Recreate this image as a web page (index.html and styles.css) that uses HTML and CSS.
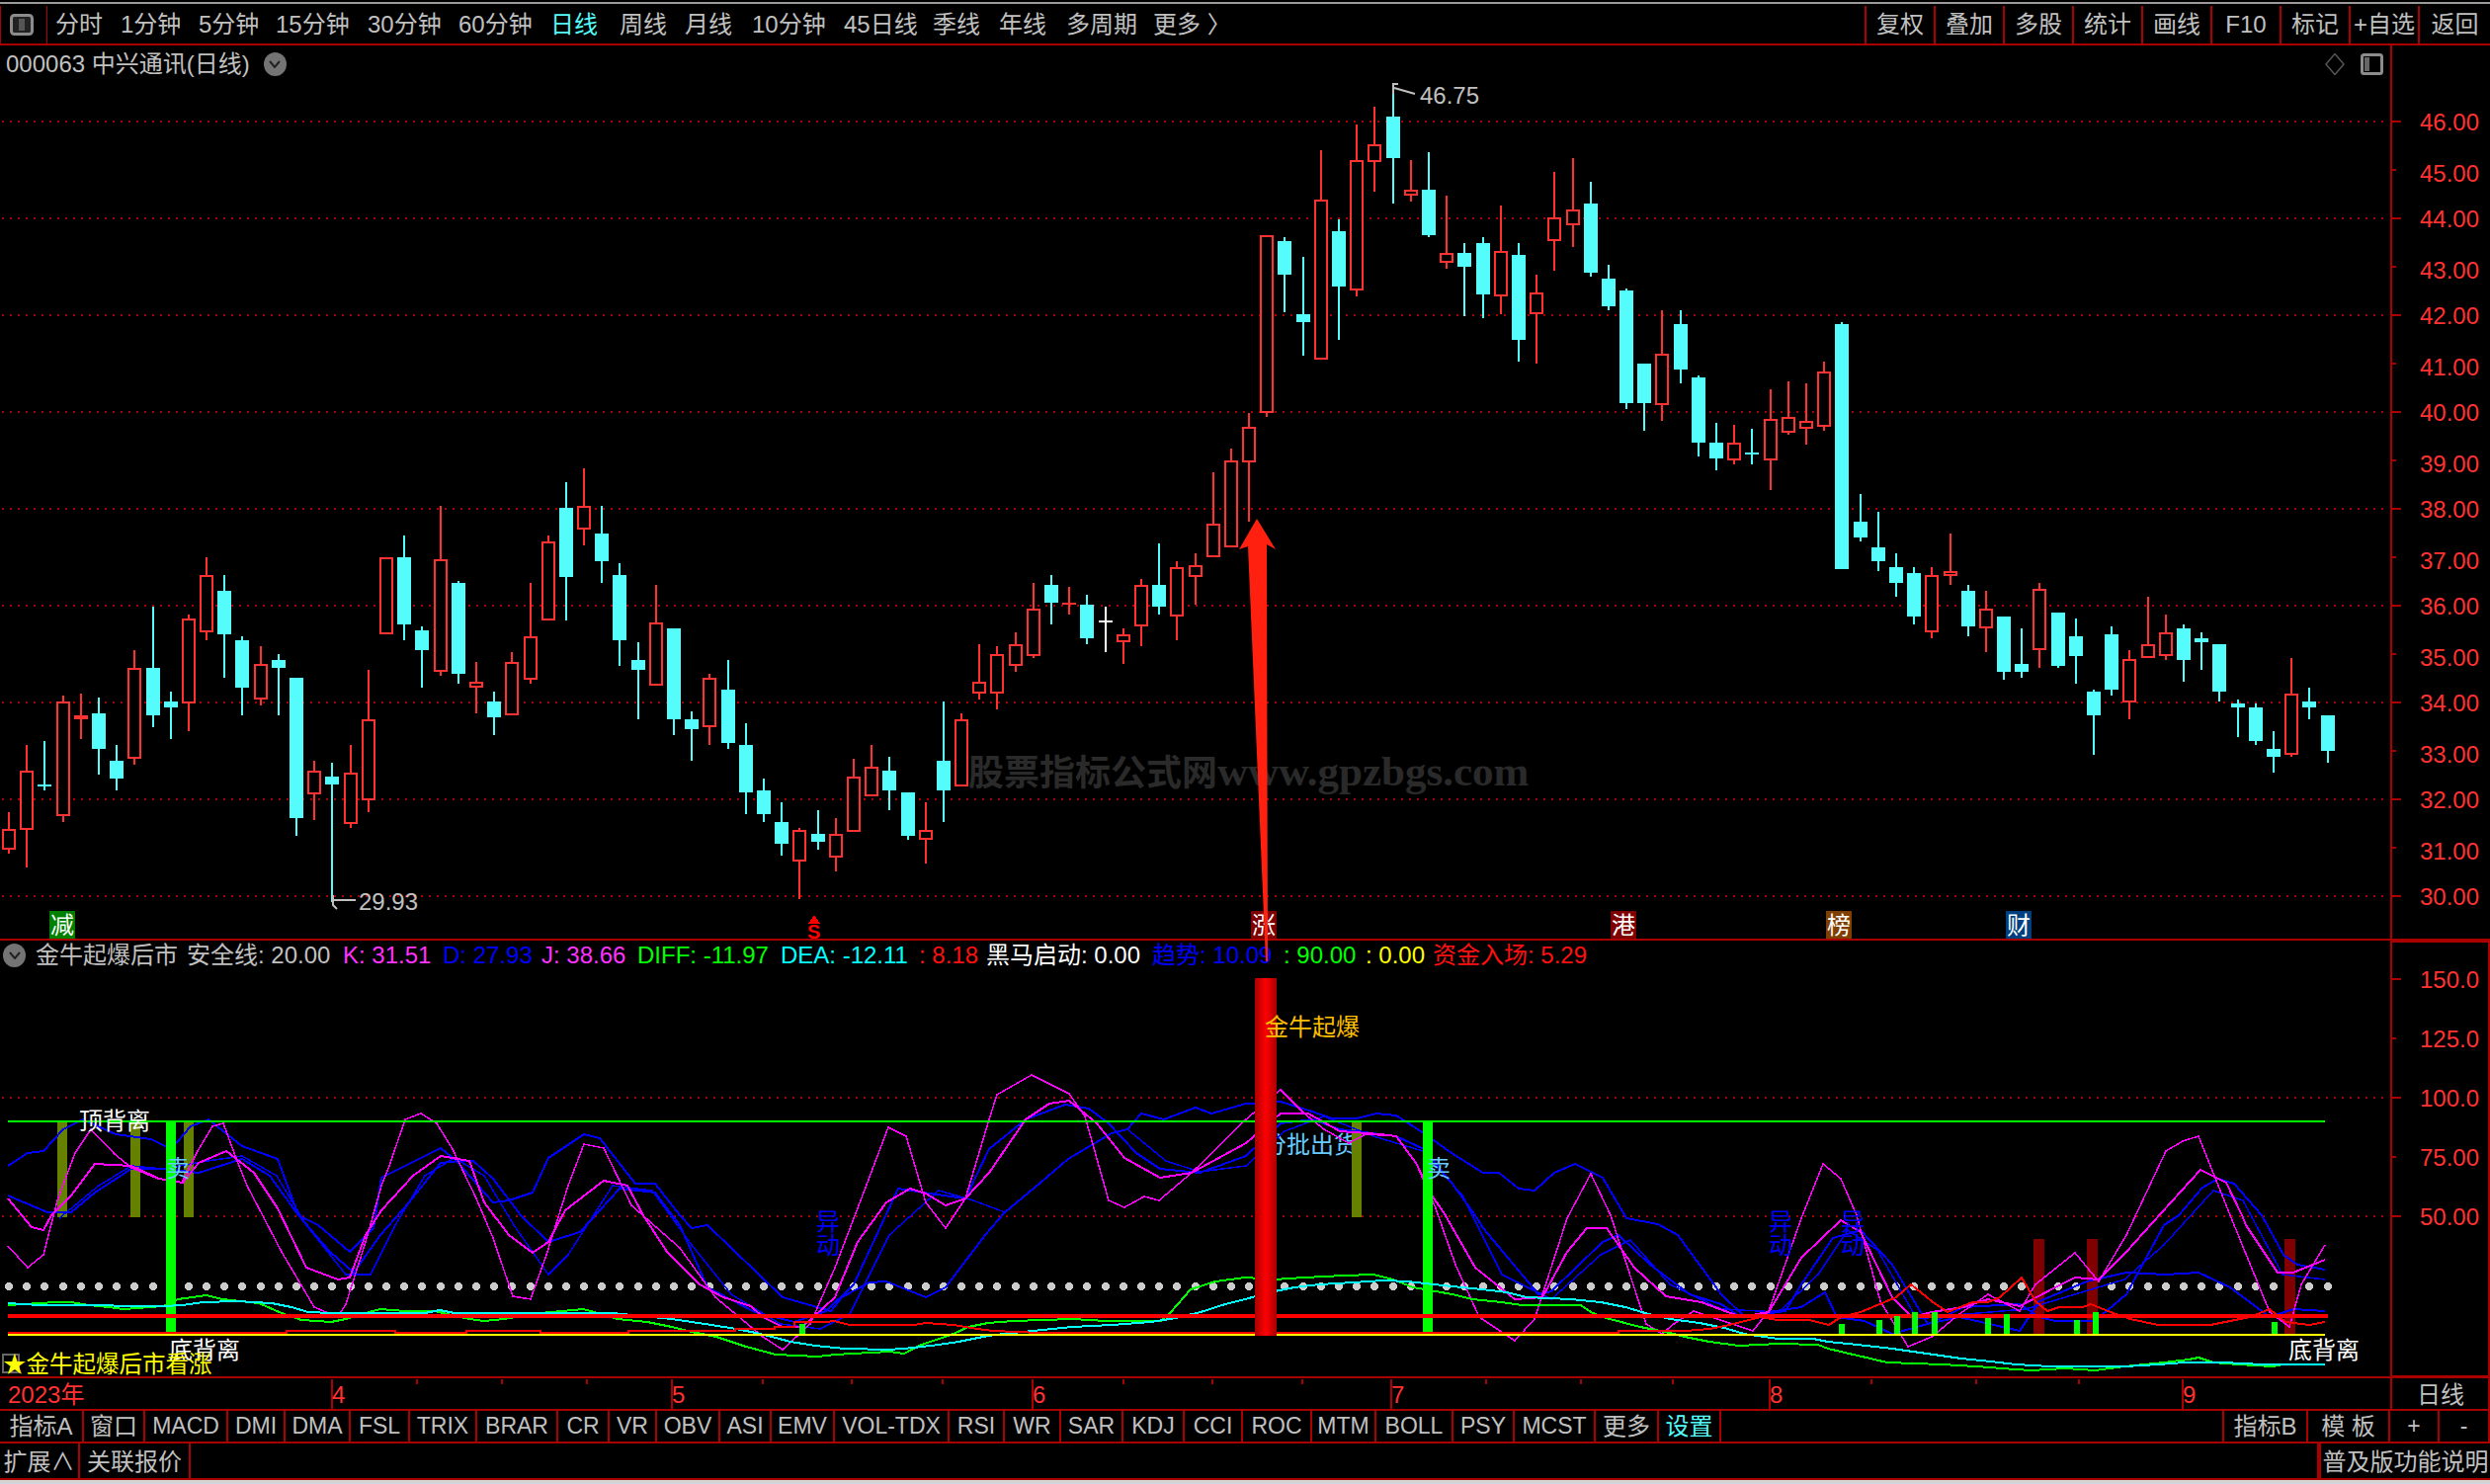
FILE: index.html
```html
<!DOCTYPE html>
<html lang="zh-CN">
<head>
	<meta charset="UTF-8">
	<title>000063 中兴通讯(日线)</title>

	<link rel="stylesheet" href="styles.css">
</head>
<body>

<div class="top-edge"></div>

<div class="toolbar">
	<div class="win-btn">
		<svg width="24" height="22" viewBox="0 0 24 22"><rect x="1.5" y="1.5" width="21" height="19" rx="3" fill="#222" stroke="#8c8c8c" stroke-width="3"/><rect x="9" y="5" width="6" height="12" fill="#555"/></svg>
	</div>
	<div class="periods">
		<span>分时</span><span>1分钟</span><span>5分钟</span><span>15分钟</span><span>30分钟</span><span>60分钟</span><span class="active">日线</span><span>周线</span><span>月线</span><span>10分钟</span><span>45日线</span><span>季线</span><span>年线</span><span>多周期</span><span>更多 〉</span>
	</div>
	<div class="tools">
		<span>复权</span><span>叠加</span><span>多股</span><span>统计</span><span>画线</span><span>F10</span><span>标记</span><span>+自选</span><span>返回</span>
	</div>
</div>

<div class="charts">
	<div class="stock-title">
		<span>000063 中兴通讯(日线)</span>
		<i class="round-btn"><svg width="12" height="8" viewBox="0 0 12 8"><path d="M1 1 L6 7 L11 1" fill="none" stroke="#222" stroke-width="2"/></svg></i>
	</div>

	<div class="corner-btns">
		<svg width="20" height="22" viewBox="0 0 20 22"><path d="M10 0.5 L19 11 L10 21.5 L1 11 Z" fill="none" stroke="#555" stroke-width="1.5"/></svg>
		<svg width="23" height="22" viewBox="0 0 23 22"><rect x="1.5" y="1.5" width="20" height="19" rx="2" fill="#000" stroke="#8c8c8c" stroke-width="3"/><rect x="4" y="4" width="5" height="14" fill="#666"/></svg>
	</div>

	<div class="ind-head">
		<i class="round-btn"><svg width="12" height="8" viewBox="0 0 12 8"><path d="M1 1 L6 7 L11 1" fill="none" stroke="#222" stroke-width="2"/></svg></i>
		<span class="gray">金牛起爆后市</span>
		<span class="gray">安全线: 20.00</span>
		<span class="pink">K: 31.51</span>
		<span class="blue">D: 27.93</span>
		<span class="pink">J: 38.66</span>
		<span class="green">DIFF: -11.97</span>
		<span class="cyan">DEA: -12.11</span>
		<span class="red">: 8.18</span>
		<span class="white">黑马启动: 0.00</span>
		<span class="blue">趋势: 10.09</span>
		<span class="green">: 90.00</span>
		<span class="yellow">: 0.00</span>
		<span class="red">资金入场: 5.29</span>
	</div>

	<svg id="chart" width="2520" height="1380" viewBox="0 46 2520 1380"></svg>
</div>

<div class="tabs">
	<span class="cn">指标A</span><span class="cn">窗口</span><span>MACD</span><span>DMI</span><span>DMA</span><span>FSL</span><span>TRIX</span><span>BRAR</span><span>CR</span><span>VR</span><span>OBV</span><span>ASI</span><span>EMV</span><span>VOL-TDX</span><span>RSI</span><span>WR</span><span>SAR</span><span>KDJ</span><span>CCI</span><span>ROC</span><span>MTM</span><span>BOLL</span><span>PSY</span><span>MCST</span><span class="cn">更多</span><span class="cn active">设置</span><span class="blank"></span><span class="cn">指标B</span><span class="cn">模 板</span><span>+</span><span>-</span>
</div>

<div class="status">
	<span>扩展∧</span><span>关联报价</span><span class="blank"></span><span>普及版功能说明</span>
</div>

<div class="bottom-edge"></div>

<script src="chart.js"></script>
</body>
</html>
```

FILE: styles.css
```css
html, body {
	width: 100%;
	height: 100%;
	margin: 0;
	overflow: hidden;
	background: #000;
	color: #c0c0c0;
	font-family: "Liberation Sans", "Noto Sans CJK SC", sans-serif;
	font-size: 24px;
}

.top-edge {
	height: 2px;
	margin-top: 2px;
	background: #9a9a9a;
}

.bottom-edge {
	height: 4px;
	background: #d4d4d4;
}

/* top bar */
.toolbar {
	display: flex;
	height: 38px;
	padding-top: 2px;
	border-bottom: 2px solid #aa0000;
}

.win-btn {
	display: flex;
	align-items: center;
	justify-content: center;
	box-sizing: border-box;
	width: 48px;
	padding-right: 4px;
	border-left: 1px solid #aa0000;
	border-right: 1px solid #aa0000;
}

.periods {
	flex: 1;
	display: grid;
	grid-template-columns: 66px 79px 78px 93px 92px 93px 70px 66px 68px 93px 90px 67px 68px 88px auto;
	padding-left: 8px;
	line-height: 38px;
	white-space: nowrap;
}

.periods .active {
	color: #54fcfc;
}

.tools {
	display: grid;
	grid-template-columns: repeat(8, 70px) 73px;
	line-height: 38px;
	text-align: center;
}

.tools span {
	border-left: 2px solid #aa0000;
	white-space: nowrap;
}

/* chart area, everything below the bar up to the tab rows */
.charts {
	position: relative;
	height: 1380px;
}

#chart {
	position: absolute;
	left: 0;
	top: 0;
	display: block;
}

.stock-title {
	position: absolute;
	left: 6px;
	top: 5px;
	display: flex;
	align-items: center;
	gap: 14px;
	line-height: 28px;
}

.round-btn {
	display: flex;
	align-items: center;
	justify-content: center;
	width: 23px;
	height: 24px;
	border-radius: 50%;
	background: #747474;
}

.corner-btns {
	position: absolute;
	left: 2353px;
	top: 8px;
	display: flex;
	gap: 16px;
}

.ind-head {
	position: absolute;
	left: 3px;
	top: 907px;
	display: grid;
	grid-template-columns: 33px 153px 158px 101px 100px 97px 145px 140px 68px 168px 133px 83px 68px auto;
	align-items: center;
	font-size: 24px;
	line-height: 28px;
	white-space: nowrap;
}

.gray { color: #c0c0c0; }
.pink { color: #ff32ff; }
.blue { color: #0000ff; }
.green { color: #00ff00; }
.cyan { color: #00ffff; }
.red { color: #ff1010; }
.white { color: #fff; }
.yellow { color: #ffff00; }

/* svg parts */
#chart text {
	font-family: "Liberation Sans", "Noto Sans CJK SC", sans-serif;
}

.pixel {
	shape-rendering: crispEdges;
}

.grid-line {
	stroke: #aa0000;
	stroke-width: 2;
	stroke-dasharray: 2 6;
	shape-rendering: crispEdges;
}

.frame-line {
	fill: #aa0000;
	shape-rendering: crispEdges;
}

.axis-label {
	fill: #ff3232;
	font-size: 24px;
}

.date-label {
	fill: #ff3232;
	font-size: 24px;
}

.span-label {
	fill: #c0c0c0;
	font-size: 24px;
}

.side-label {
	fill: #c0c0c0;
	font-size: 24px;
}

#chart .watermark {
	fill: #2a2a2a;
	font-family: "Liberation Serif", "Noto Sans CJK SC", serif;
	font-size: 43px;
	font-weight: bold;
}

.watermark .wm-cn {
	font-size: 36px;
}

.tag {
	fill: #fff;
	font-size: 24px;
}

.sig {
	font-size: 24px;
}

.sig-long {
	font-size: 23.5px;
}

.curve {
	fill: none;
	stroke-linejoin: miter;
	shape-rendering: crispEdges;
}

/* tab rows */
.tabs {
	display: grid;
	grid-template-columns: 85px 62px 84px 58px 66px 60px 68px 82px 52px 48px 64px 52px 64px 116px 56px 57px 63px 62px 59px 70px 65px 78px 62px 82px 64px 63px 509px 85px 83px 50px 51px;
	box-sizing: border-box;
	height: 35px;
	border-top: 2px solid #aa0000;
	border-bottom: 2px solid #aa0000;
	font-size: 23px;
	line-height: 31px;
	text-align: center;
	white-space: nowrap;
}

.tabs span {
	box-sizing: border-box;
	border-right: 2px solid #aa0000;
}

.tabs .cn {
	font-size: 24px;
}

.tabs .active {
	color: #54fcfc;
}

.status {
	display: grid;
	grid-template-columns: 81px 112px 1fr 173px;
	box-sizing: border-box;
	height: 37px;
	border-bottom: 2px solid #aa0000;
	line-height: 37px;
	text-align: center;
	white-space: nowrap;
}

.status span {
	box-sizing: border-box;
	border-right: 2px solid #aa0000;
}

.status span:last-child {
	border-right: 0;
	border-left: 2px solid #aa0000;
}
```

FILE: chart.js
```js
(function() {

	var RED = '#ff3232', CYAN = '#54fcfc';
	var out = [];

	// top, k: how a row's numbers map to page y
	// wick top, body top, body bottom, wick bottom, kind (r hollow, c cyan, f flat red, w white)
	var candleBlocks = [
		{ top: 520, k: 3, rows: [
			[906,956,1020,1032,'r'],[702,781,959,1074,'r'],[690,823,829,840,'c'],[552,571,917,936,'r'],
			[546,612,624,684,'f'],[558,606,714,792,'c'],[702,750,804,840,'c'],[414,469,743,762,'r'],
			[282,468,612,648,'c'],[540,570,588,684,'c'],[306,319,575,660,'r'],[132,187,359,384,'r'],
			[186,234,366,498,'c'],[372,384,528,612,'c'],[402,457,563,582,'r'],[426,444,468,612,'c'],
			[498,498,924,978,'c'],[750,781,851,930,'r'],[756,798,822,1180,'c'],[702,787,941,954,'r'],
			[474,625,869,906,'r'],[133,133,365,365,'r'],[66,132,336,384,'c'],[342,354,414,528,'c'],
			[-24,139,479,492,'r'],[204,210,486,516,'c'],[450,511,527,606,'r'],[540,570,618,672,'c'],
			[420,451,611,612,'r'],[210,373,503,516,'r'],[66,85,323,324,'r'],[-96,-18,192,324,'c'],
			[-138,-24,47,96,'r'],[-24,60,144,210,'c'],[150,186,384,462,'c'],[390,444,474,624,'c'],
			[216,331,521,522,'r'],[348,348,624,672,'c'],[600,624,654,750,'c'],[486,499,647,702,'r'],
			[444,534,696,714,'c'],[636,702,846,912,'c'],[804,840,912,936,'c'],[876,936,1002,1038,'c'],
			[954,961,1055,1170,'r'],[900,972,996,1020,'c'],
			[924,973,1043,1086,'r'],[744,799,965,965,'r'],[702,769,857,857,'r'],[738,780,840,900,'c'],
			[846,846,978,990,'c'],[876,961,989,1062,'r'],[570,750,840,936,'c'],[606,625,827,828,'r'],
			[396,511,545,564,'r'],[402,427,545,594,'r'],[360,397,461,480,'r'],[210,289,431,438,'r'],
			[186,216,270,336,'c'],[222,270,276,306,'f'],[246,276,378,396,'c'],[282,324,330,420,'w'],
			[348,367,389,456,'r'],[198,217,341,402,'r'],[90,216,282,306,'c'],[144,163,311,384,'r'],
			[120,157,191,276,'r'],[-126,31,131,131,'r'],[-198,-162,102,102,'r']
		] },
		{ top: 60, k: 3, rows: [
			[1074,1117,1223,1404,'r'],[535,535,1073,1086,'r'],[540,552,654,768,'c'],[600,774,798,900,'c'],
			[276,427,911,911,'r'],[486,522,690,852,'c'],[198,307,701,720,'r'],[144,259,311,402,'r'],
			[78,174,300,438,'c'],[306,397,413,432,'r'],[282,396,534,540,'c'],[414,589,617,636,'r'],
			[558,588,630,780,'c'],[540,558,714,786,'c'],[444,583,719,774,'r'],[558,594,852,918,'c'],
			[654,709,773,924,'r'],[342,481,551,642,'r'],[300,457,503,570,'r'],[372,438,648,660,'c'],
			[624,666,750,762,'c'],[696,702,1044,1062,'c'],[924,924,1044,1128,'c'],[762,895,1049,1098,'r'],
			[762,804,942,984,'c'],[960,966,1164,1206,'c'],[1104,1164,1212,1248,'c'],[1110,1165,1217,1230,'r'],
			[1122,1194,1200,1230,'c'],[1002,1093,1217,1308,'r'],[978,1087,1133,1140,'r'],[984,1099,1121,1170,'r'],
			[918,949,1115,1128,'r']
		] },
		{ top: 300, k: 2.45, rows: [
			[64,69,676,676,'c'],[490,559,598,608,'c'],[534,622,657,681,'c'],[637,671,710,745,'c'],
			[671,686,794,813,'c'],[671,692,832,848,'r'],[588,682,694,715,'r'],[715,730,818,843,'c'],
			[730,775,822,882,'r'],[794,794,931,951,'c'],[823,911,931,946,'c'],[710,726,876,921,'r'],
			[784,784,916,921,'c'],[799,843,892,960,'c'],[975,980,1039,1137,'c'],[818,838,975,990,'c'],
			[877,898,1008,1049,'r'],[745,863,896,897,'r'],[789,834,891,902,'r'],[813,823,902,955,'c'],
			[833,848,857,926,'c'],[862,862,980,1004,'c'],[1000,1009,1019,1093,'c'],[1009,1019,1102,1112,'c'],
			[1078,1122,1142,1181,'c'],[897,986,1137,1142,'r'],[970,1004,1019,1049,'c'],[1039,1039,1127,1156,'c']
		] }
	];

	var lines = {
		pinkFast: [8,1261,28,1283,44,1270,58,1215,76,1167,92,1143,116,1168,133,1182,160,1193,184,1197,200,1165,215,1140,226,1137,240,1175,250,1200,285,1267,318,1323,342,1333,350,1320,370,1257,386,1200,394,1180,410,1133,426,1127,442,1137,458,1163,482,1213,499,1253,519,1312,537,1315,553,1270,575,1200,591,1158,611,1162,639,1220,688,1263,724,1313,772,1353,792,1366,820,1340,845,1283,871,1215,899,1141,917,1150,937,1217,957,1243,977,1213,1001,1133,1009,1108,1044,1088,1082,1107,1098,1130,1122,1215,1138,1222,1158,1211,1173,1215,1206,1187,1261,1133,1296,1103,1320,1127,1340,1143,1365,1157,1382,1148,1413,1150,1433,1177,1453,1223,1473,1280,1497,1333,1533,1357,1553,1335,1586,1233,1610,1188,1630,1230,1642,1267,1666,1340,1682,1350,1694,1340,1714,1327,1774,1347,1790,1327,1823,1233,1845,1178,1863,1193,1879,1230,1903,1317,1931,1363,1955,1353,1983,1330,2012,1310,2044,1327,2060,1300,2100,1268,2124,1297,2152,1250,2192,1165,2209,1155,2225,1150,2241,1190,2257,1230,2297,1328,2317,1343,2329,1300,2353,1260],
		pinkSlow: [8,1213,32,1242,44,1245,52,1230,72,1210,96,1178,133,1180,161,1193,185,1197,201,1177,229,1165,257,1187,281,1223,310,1283,342,1295,354,1293,370,1250,386,1225,418,1190,446,1170,475,1175,490,1217,515,1250,539,1268,555,1257,572,1225,611,1195,635,1200,651,1230,675,1267,708,1300,732,1313,760,1322,772,1333,792,1343,812,1343,845,1313,868,1257,897,1217,921,1203,937,1208,957,1220,977,1213,1001,1187,1038,1133,1062,1117,1082,1114,1110,1137,1138,1172,1174,1192,1206,1187,1261,1157,1296,1127,1324,1127,1356,1145,1397,1148,1413,1150,1433,1177,1449,1210,1461,1227,1493,1283,1533,1315,1561,1313,1586,1267,1606,1243,1626,1243,1654,1283,1686,1312,1722,1318,1762,1333,1790,1328,1823,1273,1863,1235,1883,1247,1915,1313,1935,1333,1955,1328,1987,1323,2012,1315,2044,1322,2080,1303,2100,1293,2124,1295,2152,1267,2188,1227,2227,1184,2253,1197,2269,1230,2273,1240,2305,1288,2321,1288,2353,1275],
		blueFast: [8,1180,28,1167,44,1165,64,1143,84,1133,117,1148,153,1153,173,1163,193,1140,211,1133,245,1160,281,1173,302,1230,322,1240,354,1267,378,1243,386,1192,410,1180,446,1162,462,1175,499,1217,515,1215,539,1207,555,1172,591,1148,607,1152,643,1198,663,1198,688,1230,700,1243,716,1240,792,1313,841,1327,852,1313,880,1298,897,1297,937,1313,957,1303,997,1250,1017,1227,1053,1197,1081,1173,1125,1147,1141,1143,1155,1127,1178,1133,1210,1121,1226,1127,1261,1117,1296,1115,1328,1125,1348,1132,1373,1132,1393,1127,1413,1129,1441,1147,1469,1167,1501,1187,1517,1187,1537,1203,1553,1205,1573,1187,1594,1178,1622,1192,1646,1233,1678,1239,1698,1250,1742,1310,1766,1333,1790,1328,1823,1323,1847,1308,1859,1333,1887,1337,1915,1350,1951,1340,1983,1333,2044,1347,2064,1317,2112,1297,2152,1288,2192,1290,2225,1288,2257,1303,2297,1333,2321,1325,2353,1327],
		blueMid: [8,1210,48,1227,72,1227,96,1207,133,1183,165,1183,201,1187,245,1173,273,1190,302,1230,334,1267,358,1288,385,1250,414,1217,446,1177,466,1175,479,1175,499,1193,527,1230,555,1257,587,1247,627,1203,663,1207,688,1240,716,1303,764,1328,804,1338,836,1327,864,1300,909,1203,941,1208,977,1213,1001,1163,1038,1133,1078,1118,1102,1122,1122,1137,1150,1167,1174,1183,1214,1187,1261,1170,1296,1137,1328,1133,1356,1143,1413,1150,1441,1163,1469,1197,1493,1230,1501,1243,1557,1310,1570,1307,1622,1257,1638,1250,1670,1280,1710,1310,1742,1320,1762,1333,1807,1327,1823,1300,1855,1253,1883,1245,1915,1280,1951,1340,1967,1333,1987,1323,2044,1320,2064,1333,2080,1337,2120,1337,2152,1310,2190,1240,2205,1230,2229,1202,2245,1193,2261,1198,2289,1230,2311,1270,2325,1280,2353,1285],
		blueSlow: [60,1233,100,1200,133,1180,165,1183,210,1175,245,1170,280,1190,310,1240,350,1290,375,1290,400,1240,430,1190,460,1172,490,1190,520,1240,555,1290,575,1270,620,1200,660,1205,700,1260,740,1310,790,1340,830,1345,860,1330,900,1250,950,1205,985,1215,1017,1227,1053,1197,1081,1173,1125,1147,1141,1143,1180,1175,1214,1186,1261,1180,1300,1145,1340,1130,1390,1150,1440,1165,1480,1210,1520,1290,1570,1315,1620,1270,1650,1255,1690,1300,1742,1325,1800,1328,1840,1290,1870,1245,1900,1265,1940,1335,1990,1330,2050,1325,2100,1310,2150,1295,2190,1260,2240,1205,2270,1215,2310,1290,2353,1295],
		redThin: [8,1349,290,1349,290,1347,400,1347,400,1349,472,1349,472,1347,547,1347,547,1349,636,1349,636,1347,744,1347,744,1345,784,1345,784,1343,804,1343,804,1338,836,1338,844,1337,860,1341,925,1341,937,1339,965,1341,989,1345,1005,1347,1053,1349,1638,1349,1638,1347,1706,1347,1730,1345,1746,1342,1766,1337,1782,1333,1799,1336,1831,1336,1851,1341,1863,1333,1883,1328,1919,1313,1934,1300,1955,1317,1971,1328,1996,1318,2012,1318,2024,1313,2046,1293,2060,1317,2072,1327,2084,1323,2108,1323,2116,1320,2136,1328,2156,1335,2184,1341,2237,1341,2257,1337,2277,1333,2297,1325,2313,1338,2337,1341,2353,1338],
		diff: [8,1321,56,1318,72,1318,90,1321,110,1323,125,1325,165,1322,180,1315,209,1311,225,1315,262,1319,285,1329,305,1336,335,1338,350,1335,370,1329,385,1325,410,1327,440,1327,475,1335,490,1337,510,1335,547,1329,590,1325,605,1329,625,1335,655,1338,680,1343,700,1348,725,1353,755,1363,785,1371,828,1373,845,1371,900,1368,915,1370,930,1362,965,1350,980,1343,1000,1339,1025,1337,1055,1336,1085,1335,1120,1337,1175,1337,1185,1328,1205,1305,1230,1297,1260,1293,1290,1295,1320,1293,1360,1291,1390,1290,1410,1295,1430,1303,1470,1310,1490,1315,1520,1318,1540,1321,1600,1321,1610,1328,1625,1334,1660,1343,1690,1349,1705,1353,1730,1358,1760,1362,1800,1360,1840,1361,1850,1365,1880,1372,1910,1379,1965,1381,2000,1383,2040,1386,2055,1387,2090,1385,2120,1387,2150,1383,2170,1381,2190,1379,2215,1376,2225,1374,2240,1379,2265,1381,2300,1383,2310,1381,2353,1381],
		dea: [8,1319,40,1321,100,1321,130,1322,165,1322,185,1321,205,1318,240,1317,275,1319,295,1323,312,1328,335,1329,430,1329,445,1326,460,1329,620,1329,680,1335,700,1338,720,1341,745,1345,765,1349,785,1354,800,1358,825,1362,855,1365,900,1366,925,1364,950,1361,970,1358,1000,1352,1025,1349,1055,1346,1085,1343,1125,1341,1165,1338,1190,1334,1215,1328,1240,1320,1260,1315,1290,1307,1310,1303,1335,1300,1370,1298,1400,1296,1425,1297,1460,1301,1500,1305,1525,1308,1545,1313,1590,1315,1620,1318,1645,1323,1665,1329,1690,1335,1720,1339,1745,1344,1765,1350,1785,1353,1800,1355,1835,1355,1850,1358,1880,1361,1915,1365,1950,1370,1985,1375,2015,1378,2040,1381,2075,1383,2150,1383,2185,1381,2210,1379,2250,1379,2290,1381,2353,1381]
	};

	function candleX(i) {
		return Math.round(9 + i * 18.19);
	}

	function rect(x, y, w, h, fill) {
		out.push('<rect x="' + x + '" y="' + y + '" width="' + w + '" height="' + h + '" fill="' + fill + '"/>');
	}

	function frame(x, y, w, h) {
		out.push('<rect class="frame-line" x="' + x + '" y="' + y + '" width="' + w + '" height="' + h + '"/>');
	}

	function text(cls, x, y, str, fill) {
		out.push('<text class="' + cls + '" x="' + x + '" y="' + y + '"' + (fill ? ' fill="' + fill + '"' : '') + '>' + str + '</text>');
	}

	function gridLine(y) {
		out.push('<line class="grid-line" x1="2" x2="2417" y1="' + y + '" y2="' + y + '"/>');
	}

	function curve(points, color, width) {
		var p = [];
		for (var i = 0; i < points.length; i += 2) p.push(points[i] + ',' + points[i + 1]);
		out.push('<polyline class="curve" points="' + p.join(' ') + '" stroke="' + color + '" stroke-width="' + width + '"/>');
	}

	function drawPriceGrid() {
		for (var price = 46; price >= 30; price--) {
			var y = 123 + (46 - price) * 49;
			var even = price % 2 === 0;
			if (even) gridLine(y);
			frame(2421, y - 1, even ? 9 : 4, 2);
			text('axis-label', 2449, y + (even ? 9 : 12), price + '.00');
		}
	}

	function drawCandles() {
		var n = 0;
		candleBlocks.forEach(function(block) {
			block.rows.forEach(function(r) {
				var x = candleX(n++);
				var wickTop = Math.round(block.top + r[0] / block.k);
				var bodyTop = Math.round(block.top + r[1] / block.k);
				var bodyBottom = Math.round(block.top + r[2] / block.k);
				var wickBottom = Math.round(block.top + r[3] / block.k);
				var kind = r[4];
				var color = kind === 'c' ? CYAN : kind === 'w' ? '#fff' : RED;

				if (wickBottom > wickTop) rect(x - 1, wickTop, 2, wickBottom - wickTop, color);

				if (kind === 'r') {
					out.push('<rect x="' + (x - 6) + '" y="' + (bodyTop + 1) + '" width="12" height="' + (bodyBottom - bodyTop - 2) + '" fill="#000" stroke="' + RED + '" stroke-width="2"/>');
				} else {
					rect(x - 7, bodyTop, 14, Math.max(bodyBottom - bodyTop, 2), color);
				}
			});
		});
	}

	function drawExtremes() {
		out.push('<path d="M1410 95 V85 H1415 M1411 89 L1432 95" fill="none" stroke="#c0c0c0" stroke-width="2"/>');
		text('span-label', 1437, 105, '46.75');
		out.push('<path d="M337 906 V916 L341 920 M337 911 H360" fill="none" stroke="#c0c0c0" stroke-width="2"/>');
		text('span-label', 363, 921, '29.93');
	}

	function drawTags() {
		[['减', 50, '#007f00'], ['涨', 1266, '#7f0000'], ['港', 1630, '#7f0000'], ['榜', 1848, '#7f3f00'], ['财', 2030, '#003f7f']].forEach(function(t) {
			rect(t[1], 922, 26, 28, t[2]);
			text('tag', t[1] + 1, 945, t[0]);
		});
		out.push('<polygon points="824,926 830,935 818,935" fill="#ff0000"/>');
		out.push('<text x="817" y="950" fill="#ff0000" font-size="20" font-weight="bold">S</text>');
	}

	function drawArrow() {
		out.push('<polygon points="1272,525 1291,556 1282,551 1283,973 1281,973 1263,553 1254,556" fill="#ff2010"/>');
	}

	function drawIndicatorAxis() {
		[[150, '150.0', 9], [125, '125.0', 4], [100, '100.0', 9], [75, '75.00', 4], [50, '50.00', 9]].forEach(function(t) {
			var y = 1111 + (100 - t[0]) * 2.4;
			if (t[0] === 100 || t[0] === 50) gridLine(y);
			frame(2421, y - 1, t[2], 2);
			text('axis-label', 2449, y + 9, t[1]);
		});
	}

	function drawIndicator() {
		var i;

		text('sig', 1278, 1167, '分批出货', '#66ccff');

		// white dots, one on every candle
		for (i = 0; i < 130; i++) {
			out.push('<circle cx="' + candleX(i) + '" cy="1302" r="4" fill="#cccccc"/>');
		}

		// olive and green columns
		[58, 132, 186, 1368].forEach(function(x) { rect(x, 1135, 10, 97, '#668000'); });
		[2058, 2112, 2312].forEach(function(x) { rect(x, 1254, 11, 97, '#800000'); });

		curve(lines.blueSlow, '#0000ff', 1.5);
		curve(lines.blueMid, '#0000ff', 2);
		curve(lines.blueFast, '#0000ff', 2);
		curve(lines.pinkFast, '#ff00ff', 1.5);
		curve(lines.pinkSlow, '#ff00ff', 2);

		rect(8, 1134, 2345, 2, '#00ff00');
		rect(168, 1135, 10, 213, '#00ff00');
		rect(1440, 1135, 10, 213, '#00ff00');

		curve(lines.diff, '#00ff00', 2);
		curve(lines.dea, '#00ffff', 2);

		rect(8, 1330, 2348, 4, '#ff0000');
		curve(lines.redThin, '#ff0000', 2);

		[[809, 1340], [1861, 1340], [1899, 1336], [1917, 1332], [1935, 1328], [1955, 1328], [2009, 1334], [2028, 1330], [2099, 1336], [2118, 1328], [2299, 1338]].forEach(function(b) {
			rect(b[0], b[1], 6, 1350 - b[1], '#00ff00');
		});

		rect(8, 1350, 2345, 2, '#ffff00');
		rect(1270, 990, 22, 362, 'url(#bigBar)');

		text('sig', 80, 1143, '顶背离', '#fff');
		text('sig', 171, 1375, '底背离', '#fff');
		text('sig', 2316, 1375, '底背离', '#fff');
		out.push('<rect x="3" y="1371" width="16" height="18" fill="none" stroke="#666" stroke-width="2"/>');
		text('sig-long', 3, 1389, '★金牛起爆后市看涨', '#ffff00');
		text('sig', 1280, 1048, '金牛起爆', '#ffc000');
		text('sig', 168, 1191, '卖', '#66ccff');
		text('sig', 1444, 1191, '卖', '#66ccff');

		[826, 1790, 1863].forEach(function(x) {
			text('sig', x, 1245, '异', '#0000ff');
			text('sig', x, 1269, '动', '#0000ff');
		});
	}

	function drawDates() {
		[335, 679, 1044, 1407, 1790, 2208].forEach(function(x) { frame(x, 1396, 2, 30); });
		[421, 507, 593, 771, 861, 953, 1136, 1226, 1317, 1503, 1599, 1692, 1893, 1999, 2103].forEach(function(x) { frame(x, 1396, 2, 5); });
		text('date-label', 8, 1420, '2023年');
		[[336, '4'], [680, '5'], [1045, '6'], [1408, '7'], [1791, '8'], [2209, '9']].forEach(function(d) {
			text('date-label', d[0], 1420, d[1]);
		});
		text('side-label', 2446, 1420, '日线');
	}

	function drawFrame() {
		frame(0, 950, 2520, 2);
		frame(2419, 950, 101, 4);
		frame(0, 1393, 2520, 2);
		frame(2419, 1392, 101, 3);
		frame(2419, 46, 2, 1380);
		frame(2518, 950, 2, 476);
	}

	out.push('<defs><linearGradient id="bigBar"><stop offset="0" stop-color="#a80000"/><stop offset="0.5" stop-color="#ff0000"/><stop offset="1" stop-color="#a80000"/></linearGradient></defs>');
	out.push('<text class="watermark" x="980" y="795"><tspan class="wm-cn">股票指标公式网</tspan>www.gpzbgs.com</text>');

	out.push('<g class="pixel">');
	drawPriceGrid();
	drawCandles();
	drawTags();
	drawIndicatorAxis();
	drawIndicator();
	drawDates();
	drawFrame();
	out.push('</g>');
	drawExtremes();
	drawArrow();

	document.getElementById('chart').innerHTML = out.join('');

})();
```
